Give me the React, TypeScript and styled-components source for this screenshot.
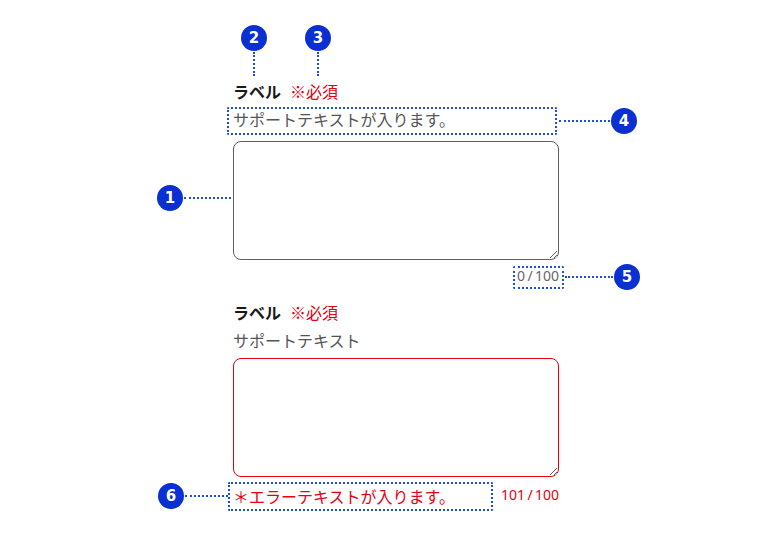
import styled, { createGlobalStyle } from "styled-components";

const RED = "#e60012";
const NOTE = "#1d4ee0";

const GlobalStyle = createGlobalStyle`
  body {
    margin: 0;
    background: #fff;
    font-family: "Noto Sans CJK JP", "Noto Sans", sans-serif;
  }
`;

const Canvas = styled.div`
  position: relative;
  width: 768px;
  height: 560px;
  overflow: hidden;
  background: #fff;
`;

const Form = styled.div`
  display: flex;
  flex-direction: column;
  gap: 14px;
  width: 326px;
  margin-left: 233px;
  padding-top: 79px;
`;

const Field = styled.div`
  display: flex;
  flex-direction: column;
`;

const LabelRow = styled.div`
  display: flex;
  align-items: baseline;
  gap: 9px;
  font-size: 16px;
  line-height: 24px;
`;

const Label = styled.label`
  font-weight: 700;
  color: #1a1a1a;
`;

const Required = styled.span`
  color: ${RED};
`;

const Support = styled.div<{ $space: number }>`
  margin-top: 4px;
  margin-bottom: ${({ $space }) => $space}px;
  font-size: 16px;
  line-height: 24px;
  color: #555;
`;

const Area = styled.textarea<{ $error?: boolean }>`
  display: block;
  box-sizing: border-box;
  width: 326px;
  height: 119px;
  margin: 0;
  padding: 8px 12px;
  border: 1px solid ${({ $error }) => ($error ? RED : "#5e5e5e")};
  border-radius: 8px;
  background: #fff;
  font: inherit;
  font-size: 16px;
  resize: vertical;
  outline: none;
`;

const Footer = styled.div<{ $error?: boolean }>`
  display: flex;
  align-items: flex-start;
  justify-content: ${({ $error }) => ($error ? "space-between" : "flex-end")};
  margin-top: ${({ $error }) => ($error ? 7 : 5)}px;
`;

const ErrorText = styled.div`
  font-size: 16px;
  line-height: 24px;
  color: ${RED};
`;

const Count = styled.div<{ $over?: boolean }>`
  font-family: "Noto Sans", "Noto Sans CJK JP", sans-serif;
  font-size: 14px;
  line-height: 21px;
  color: ${({ $over }) => ($over ? RED : "#666")};
`;

/* annotation overlay: numbered pins, dotted leaders and frames */
const Pin = styled.div<{ $x: number; $y: number }>`
  position: absolute;
  left: ${({ $x }) => $x - 13}px;
  top: ${({ $y }) => $y - 13}px;
  width: 26px;
  height: 26px;
  border-radius: 50%;
  background: #0a2fd2;
  color: #fff;
  display: flex;
  align-items: center;
  justify-content: center;
  font-family: "DejaVu Sans", sans-serif;
  font-weight: 700;
  font-size: 15px;
  line-height: 1;
`;

const HLine = styled.div<{ $x: number; $y: number; $w: number }>`
  position: absolute;
  left: ${({ $x }) => $x}px;
  top: ${({ $y }) => $y - 1}px;
  width: ${({ $w }) => $w}px;
  border-top: 2px dotted ${NOTE};
`;

const VLine = styled.div<{ $x: number; $y: number; $h: number }>`
  position: absolute;
  left: ${({ $x }) => $x - 1}px;
  top: ${({ $y }) => $y}px;
  height: ${({ $h }) => $h}px;
  border-left: 2px dotted ${NOTE};
`;

const Frame = styled.div<{ $x: number; $y: number; $w: number; $h: number }>`
  position: absolute;
  left: ${({ $x }) => $x}px;
  top: ${({ $y }) => $y}px;
  width: ${({ $w }) => $w}px;
  height: ${({ $h }) => $h}px;
  box-sizing: border-box;
  border: 2px dotted ${NOTE};
  border-radius: 2px;
  pointer-events: none;
`;

const pins = [
  { n: 1, x: 170, y: 198 },
  { n: 2, x: 254, y: 38 },
  { n: 3, x: 318, y: 38 },
  { n: 4, x: 624, y: 121 },
  { n: 5, x: 627, y: 277 },
  { n: 6, x: 171, y: 496 },
];

export default function App() {
  return (
    <>
      <GlobalStyle />
      <Canvas>
        <Form>
          <Field>
            <LabelRow>
              <Label>ラベル</Label>
              <Required>※必須</Required>
            </LabelRow>
            <Support $space={10}>サポートテキストが入ります。</Support>
            <Area />
            <Footer>
              <Count>0{"\u2009/\u2009"}100</Count>
            </Footer>
          </Field>
          <Field>
            <LabelRow>
              <Label>ラベル</Label>
              <Required>※必須</Required>
            </LabelRow>
            <Support $space={6}>サポートテキスト</Support>
            <Area $error />
            <Footer $error>
              <ErrorText>＊エラーテキストが入ります。</ErrorText>
              <Count $over>101{"\u2009/\u2009"}100</Count>
            </Footer>
          </Field>
        </Form>

        <Frame $x={227} $y={107} $w={330} $h={28} />
        <Frame $x={513} $y={266} $w={51} $h={23} />
        <Frame $x={228} $y={482} $w={265} $h={29} />

        <VLine $x={254} $y={52} $h={24} />
        <VLine $x={318} $y={52} $h={24} />
        <HLine $x={559} $y={121} $w={51} />
        <HLine $x={184} $y={198} $w={47} />
        <HLine $x={565} $y={277} $w={48} />
        <HLine $x={185} $y={496} $w={43} />

        {pins.map((p) => (
          <Pin key={p.n} $x={p.x} $y={p.y}>
            {p.n}
          </Pin>
        ))}
      </Canvas>
    </>
  );
}
